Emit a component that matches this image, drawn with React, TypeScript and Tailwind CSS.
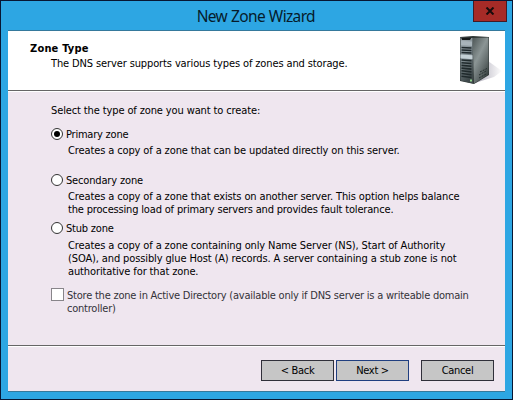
import type { ReactNode } from "react";

function ServerIcon() {
  return (
    <svg width="45" height="50" viewBox="0 0 45 50" aria-hidden="true">
      <defs>
        <linearGradient id="side" x1="0" y1="0" x2="0.7" y2="1">
          <stop offset="0" stopColor="#4c5555" />
          <stop offset="0.45" stopColor="#8b9595" />
          <stop offset="0.75" stopColor="#626b6b" />
          <stop offset="1" stopColor="#394241" />
        </linearGradient>
        <linearGradient id="front" x1="0" y1="0" x2="0.3" y2="1">
          <stop offset="0" stopColor="#a3adb3" />
          <stop offset="0.5" stopColor="#7d898e" />
          <stop offset="1" stopColor="#3f494b" />
        </linearGradient>
        <linearGradient id="shadow" x1="0" y1="0" x2="1" y2="0">
          <stop offset="0" stopColor="#aaa7b5" />
          <stop offset="1" stopColor="#ffffff" />
        </linearGradient>
      </defs>
      <path d="M28 25 L42 35 L34 41 L15 47Z" fill="url(#shadow)" />
      <path d="M0 1 L13 0 L29 1 L29 39 L14 48 L0 45Z" fill="#303837" />
      <path d="M12.500 2 L28.500 1.500 L28.500 38.500 L14 47.500Z" fill="url(#side)" />
      <path d="M0.5 1.500 L12.500 2 L13 47.500 L0.500 44.500Z" fill="url(#front)" />
      <path d="M1 1.500h10.500l-1.500 2.500H2z" fill="#15191a" />
      <path d="M1 5l11 0.500v4.500l-11-1z" fill="#a9b4ba" />
      <path d="M1.500 11.500l10 0.500M1.500 14l10 0.600M1.500 16.500l10 0.600" stroke="#20292c" strokeWidth="1.500" />
      <path d="M0.500 18.500l12 0.800v4l-12-1z" fill="#c4d0d5" />
      <path d="M1.500 24l10 0.800M1.500 26.700l10 0.800M1.500 29.400l10 0.900M1.500 32.100l10 1M1.500 34.800l10 1.100M1.500 37.500l10 1.200M1.500 40.200l10 1.300" stroke="#202a2c" strokeWidth="1.600" />
      <path d="M10 43.500h2v2h-2z" fill="#91d58e" />
      <path d="M19 39l8-4.500M19 42l8-4.500M20 36l7-3.500" stroke="#263030" strokeDasharray="2 1" />
    </svg>
  );
}

function Radio({ checked = false }: { checked?: boolean }) {
  return (
    <span className="flex size-3 shrink-0 items-center justify-center rounded-full border border-[#333] bg-white">
      {checked && <span className="size-1.5 rounded-full bg-black" />}
    </span>
  );
}

function Line({ children, className = "" }: { children: ReactNode; className?: string }) {
  return <div className={`h-[13px] whitespace-nowrap leading-[15px] ${className}`}>{children}</div>;
}

function Button({ children, className }: { children: ReactNode; className: string }) {
  return (
    <button className={`flex h-[21px] w-[73px] items-center justify-center whitespace-pre border bg-[#c6c6c6] pt-px tracking-[-0.3px] ${className}`}>
      {children}
    </button>
  );
}

export default function App() {
  return (
    <div className="flex h-[400px] w-[513px] flex-col border border-[#071633] bg-[#2da6e3] pr-[7px] pb-[7px] pl-[7px] font-['DejaVu_Sans_Condensed','DejaVu_Sans',sans-serif] text-[11px] text-black [font-stretch:condensed]">
      <header className="flex h-[29px] shrink-0 justify-end">
        <h1 className="mr-[158px] pt-[3px] font-['Noto_Sans',sans-serif] text-[15.5px] leading-[24px] tracking-[-0.65px] [word-spacing:0.5px] whitespace-nowrap text-[#061b2b]">New Zone Wizard</h1>
        <button className="-mr-[2px] flex h-[21px] w-[34px] items-center justify-center border border-t-0 border-[#421b26] bg-[#a62b27]" aria-label="Close">
          <svg width="10" height="8" viewBox="0 0 10 8"><path d="M1.5 0.5L8.5 7.5M8.5 0.5L1.5 7.5" stroke="#180b0b" strokeWidth="2" /></svg>
        </button>
      </header>
      <main className="flex min-h-0 flex-1 flex-col border-t border-b border-[#35799c] bg-[#efe6ef]">
        <section className="flex h-[60px] shrink-0 justify-between border-b border-[#666] bg-white">
          <div className="pt-[10px] pl-[22px]">
            <Line className="font-bold tracking-[0.2px]">Zone Type</Line>
            <Line className="mt-[2px] pl-[21px] tracking-[-0.12px]">The DNS server supports various types of zones and storage.</Line>
          </div>
          <div className="pt-[5px]"><ServerIcon /></div>
        </section>
        <section className="flex h-[254px] shrink-0 flex-col border-t border-t-white pl-[43px] tracking-[-0.12px]">
          <Line className="mt-[11px]">Select the type of zone you want to create:</Line>
          <div className="mt-[11px] flex h-[13px] items-center gap-[3px] tracking-[-0.22px]"><Radio checked /><Line>Primary zone</Line></div>
          <Line className="mt-[3px] pl-[17px]">Creates a copy of a zone that can be updated directly on this server.</Line>
          <div className="mt-[17px] flex h-[13px] items-center gap-[3px] tracking-[-0.16px]"><Radio /><Line>Secondary zone</Line></div>
          <div className="mt-[3px] pl-[17px]">
            <Line>Creates a copy of a zone that exists on another server. This option helps balance</Line>
            <Line className="tracking-[-0.17px]">the processing load of primary servers and provides fault tolerance.</Line>
          </div>
          <div className="mt-[6px] flex h-[13px] items-center gap-[3px] tracking-[-0.2px]"><Radio /><Line>Stub zone</Line></div>
          <div className="mt-[4px] pl-[17px]">
            <Line>Creates a copy of a zone containing only Name Server (NS), Start of Authority</Line>
            <Line>(SOA), and possibly glue Host (A) records. A server containing a stub zone is not</Line>
            <Line>authoritative for that zone.</Line>
          </div>
          <div className="mt-[11px] flex gap-[3px] tracking-[-0.22px] text-[#343238]">
            <span className="size-[13px] shrink-0 border border-[#88858a] bg-white" />
            <div>
              <Line>Store the zone in Active Directory (available only if DNS server is a writeable domain</Line>
              <Line>controller)</Line>
            </div>
          </div>
        </section>
        <footer className="flex flex-1 justify-end border-t border-[#666]">
          <div className="flex w-full justify-end border-t border-white pt-[13px] pr-[11px]">
            <Button className="border-[#30303a]">&lt; Back</Button>
            <Button className="ml-[2px] border-[#203f80]">Next &gt;</Button>
            <Button className="ml-[12px] border-[#30303a]">Cancel</Button>
          </div>
        </footer>
      </main>
    </div>
  );
}
